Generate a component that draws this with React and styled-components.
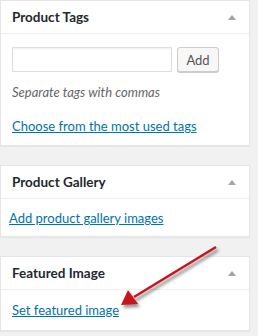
import styled, { createGlobalStyle } from "styled-components";

const GlobalStyle = createGlobalStyle`
  body {
    margin: 0;
    background: #f1f1f1;
    font-family: Lato, "Open Sans", sans-serif;
    color: #444;
  }
`;

const Page = styled.div`
  position: relative;
  width: 258px;
  height: 336px;
  overflow: hidden;
`;

const Column = styled.div`
  display: flex;
  flex-direction: column;
  gap: 19px;
  width: 250px;
`;

const Box = styled.div`
  background: #fff;
  border: 1px solid #e5e5e5;
  box-shadow: 0 1px 1px rgba(0, 0, 0, 0.04);
`;

const Header = styled.div`
  display: flex;
  align-items: center;
  justify-content: space-between;
  height: 32px;
  padding: 0 12px 0 11px;
  border-bottom: 1px solid #eee;
`;

const Title = styled.h2`
  margin: 0;
  font-size: 13.5px;
  font-weight: 700;
  color: #23282d;
`;

const Toggle = styled.span`
  width: 0;
  height: 0;
  border-left: 4px solid transparent;
  border-right: 4px solid transparent;
  border-bottom: 5px solid #a0a5aa;
  margin-right: 1px;
`;

const Body = styled.div`
  padding: ${(p) => p.$pad || "12px"};
`;

const TagRow = styled.div`
  display: flex;
  gap: 5px;
`;

const Input = styled.input`
  box-sizing: border-box;
  width: 160px;
  height: 25px;
  border: 1px solid #ddd;
  box-shadow: inset 0 1px 2px rgba(0, 0, 0, 0.07);
  background: #fff;
  margin: 0;
`;

const Button = styled.button`
  box-sizing: border-box;
  width: 42px;
  height: 25px;
  border: 1px solid #ccc;
  border-radius: 3px;
  background: #f7f7f7;
  box-shadow: 0 1px 0 #ccc;
  color: #555;
  font-family: inherit;
  font-size: 13px;
  padding: 0;
`;

const Hint = styled.p`
  margin: 10px 0 0;
  font-size: 13px;
  line-height: 20px;
  font-style: italic;
  color: #666;
`;

const Link = styled.a`
  display: block;
  font-size: 13px;
  line-height: 20px;
  color: #0073aa;
  text-decoration: underline;
  margin-top: ${(p) => p.$top || "0"};
`;

const Arrow = () => (
  <svg
    width="258"
    height="336"
    style={{ position: "absolute", left: 0, top: 0, pointerEvents: "none" }}
  >
    <defs>
      <filter id="sh" x="-20%" y="-20%" width="140%" height="140%">
        <feGaussianBlur stdDeviation="1.6" />
      </filter>
    </defs>
    <g opacity="0.5" filter="url(#sh)" transform="translate(2 3)">
      <line x1="216" y1="247" x2="134" y2="297" stroke="#333" strokeWidth="3" />
      <polygon points="121,305 128,290 138,304" fill="#333" />
    </g>
    <line x1="216" y1="247" x2="134" y2="297" stroke="#c8151b" strokeWidth="2.6" />
    <polygon points="121,305 128,290 138,304" fill="#c8151b" />
  </svg>
);

export default function App() {
  return (
    <Page>
      <GlobalStyle />
      <Column>
        <Box>
          <Header>
            <Title>Product Tags</Title>
            <Toggle />
          </Header>
          <Body $pad="13px 12px 9px 11px">
            <TagRow>
              <Input type="text" />
              <Button>Add</Button>
            </TagRow>
            <Hint>Separate tags with commas</Hint>
            <Link href="#" $top="14px">Choose from the most used tags</Link>
          </Body>
        </Box>
        <Box>
          <Header>
            <Title>Product Gallery</Title>
            <Toggle />
          </Header>
          <Body $pad="9px 9px 8px 8px">
            <Link href="#">Add product gallery images</Link>
          </Body>
        </Box>
        <Box>
          <Header>
            <Title>Featured Image</Title>
            <Toggle />
          </Header>
          <Body $pad="10px 12px 10px 11px">
            <Link href="#">Set featured image</Link>
          </Body>
        </Box>
      </Column>
      <Arrow />
    </Page>
  );
}
